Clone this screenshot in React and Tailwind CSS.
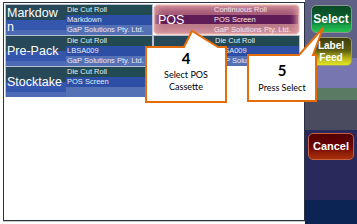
import React from "react";

function Tile({ label, lines }) {
  return (
    <div className="h-[31px] flex border-x border-t border-[#b8c1d3] bg-[linear-gradient(to_bottom,#274858_0%,#274858_50%,#3456ac_50%,#3456ac_82%,#4d6ab4_82%)]">
      <div className="w-[60px] shrink-0 pl-[1px] pr-[3px] flex items-center text-white text-[12.5px] leading-[14px]">
        <span className="min-w-0 break-all">{label}</span>
      </div>
      <div className="flex-1 flex flex-col text-[7.5px] leading-[10px] text-[#e6eaf2] overflow-hidden whitespace-nowrap">
        <div className="h-[10px] bg-[#224a52] pl-[1px]">{lines[0]}</div>
        <div className="h-[10px] bg-[#2c4ea4] pl-[1px]">{lines[1]}</div>
        <div className="h-[10px] bg-[#5571b6] pl-[1px]">{lines[2]}</div>
      </div>
    </div>
  );
}

function PosTile() {
  return (
    <div className="h-[31px] flex rounded-[5px] border border-[#f6d8c8] bg-[linear-gradient(to_bottom,#a45a76_0%,#a45a76_33%,#601c57_33%,#601c57_66%,#bb7a88_66%)] shadow-[inset_0_0_0_1px_#e0a8a8,inset_0_0_6px_3px_#dc9ea4] overflow-hidden">
      <div className="w-[59px] shrink-0 pl-[4px] flex items-center text-white text-[12.5px] leading-[14px]">
        POS
      </div>
      <div className="flex-1 flex flex-col text-[7.5px] leading-[10px] text-[#f2e4ea] whitespace-nowrap">
        <div className="h-[10px] pl-[1px]">Continuous Roll</div>
        <div className="h-[10px] pl-[1px]">POS Screen</div>
        <div className="h-[10px] pl-[1px]">GaP Solutions Pty. Ltd.</div>
      </div>
    </div>
  );
}

export default function App() {
  return (
    <div className="relative w-[357px] h-[224px] bg-white flex overflow-hidden font-['Liberation_Sans',Arial,sans-serif]">
      {/* main panel */}
      <div className="ml-[3px] mt-[2px] w-[302px] h-[219px] border border-[#2b3140] bg-white p-[1px] shadow-[0_1px_0_#c8c8c8]">
        <div className="grid grid-cols-[148px_147px] items-start">
          <div className="flex flex-col">
            <Tile label="Markdown" lines={["Die Cut Roll", "Markdown", "GaP Solutions Pty. Ltd."]} />
            <Tile label="Pre-Pack" lines={["Die Cut Roll", "LBSA009", "GaP Solutions Pty. Ltd."]} />
            <Tile label="Stocktake" lines={["Die Cut Roll", "POS Screen", ""]} />
          </div>
          <div className="flex flex-col">
            <PosTile />
            <Tile label="Counter" lines={["Die Cut Roll", "LBSA009", "GaP Solutions Pty. Ltd."]} />
          </div>
        </div>
      </div>

      {/* sidebar */}
      <div className="flex-1 flex flex-col items-center bg-[linear-gradient(to_bottom,#5e6086_0px,#5e6086_58px,#7876b0_58px,#7876b0_88px,#5a7a64_88px,#5a7a64_100px,#4a4b5e_100px,#4a4b5e_130px,#29295b_130px,#29295b_200px,#0c2453_200px)]">
        <div className="mt-[5px] w-[41px] h-[28px] rounded-[5px] border border-[#8a9a90] bg-[linear-gradient(to_bottom,#0a4a24_0%,#0c6230_55%,#18a146_75%,#25c252_100%)] flex items-center justify-center text-white font-bold text-[12px]">
          Select
        </div>
        <div className="mt-[4px] w-[41px] h-[29px] rounded-[5px] border border-[#9a9a70] bg-[linear-gradient(to_bottom,#3e3e0c_0%,#5a5a12_45%,#b4b41c_75%,#e4e424_100%)] flex flex-col items-center justify-center text-white font-bold text-[10px] leading-[12px]">
          <span>Label</span>
          <span>Feed</span>
        </div>
        <div className="mt-[67px] w-[46px] h-[27px] rounded-[5px] border border-[#c8603c] bg-[linear-gradient(to_bottom,#520000_0%,#6a0404_50%,#8e1c06_75%,#a8300c_100%)] flex items-center justify-center text-white font-bold text-[11px]">
          Cancel
        </div>
      </div>

      {/* callouts */}
      <svg className="absolute inset-0 pointer-events-none" width="357" height="224" viewBox="0 0 357 224">
        <path d="M146,47 L184,47 L192,31 L218,47 L226,47 L226,102 L146,102 Z" fill="#ffffff" stroke="#e46c0a" strokeWidth="2" strokeLinejoin="miter" />
        <path d="M248,55 L299,55 L323,28 L313,55 L316,55 L316,101 L248,101 Z" fill="#ffffff" stroke="#e46c0a" strokeWidth="2" strokeLinejoin="miter" />
      </svg>
      <div className="absolute left-[146px] top-[50px] w-[80px] flex flex-col items-center text-black font-['Lato',sans-serif]">
        <span className="font-bold text-[15px] leading-[16px]">4</span>
        <span className="text-[9px] leading-[12px] mt-[3px]">Select POS</span>
        <span className="text-[9px] leading-[12px]">Cassette</span>
      </div>
      <div className="absolute left-[248px] top-[62px] w-[68px] flex flex-col items-center text-black font-['Lato',sans-serif]">
        <span className="font-bold text-[15px] leading-[16px]">5</span>
        <span className="text-[9px] leading-[12px] mt-[4px]">Press Select</span>
      </div>
    </div>
  );
}
